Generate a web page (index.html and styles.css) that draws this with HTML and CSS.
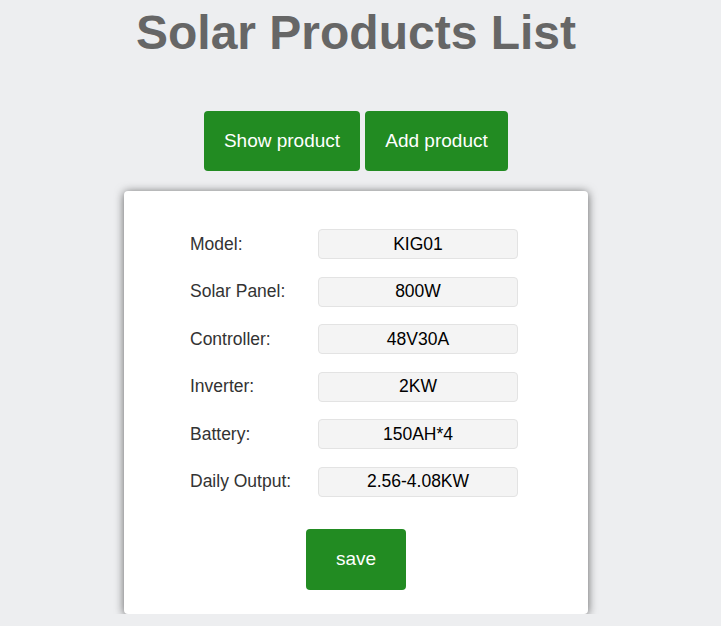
FILE: index.html
```html
<!DOCTYPE html>
<html>
<head>
<meta charset="utf-8">
<link rel="stylesheet" href="styles.css">
</head>
<body>
<div class="page">
  <h1 class="title">Solar Products List</h1>
  <div class="tabs">
    <button class="btn tab tab-show">Show product</button>
    <button class="btn tab tab-add">Add product</button>
  </div>
  <div class="card">
    <div class="form">
      <div class="row"><span class="label">Model:</span><input class="field" value="KIG01"></div>
      <div class="row"><span class="label">Solar Panel:</span><input class="field" value="800W"></div>
      <div class="row"><span class="label">Controller:</span><input class="field" value="48V30A"></div>
      <div class="row"><span class="label">Inverter:</span><input class="field" value="2KW"></div>
      <div class="row"><span class="label">Battery:</span><input class="field" value="150AH*4"></div>
      <div class="row"><span class="label">Daily Output:</span><input class="field" value="2.56-4.08KW"></div>
    </div>
    <div class="actions"><button class="btn save">save</button></div>
  </div>
</div>
</body>
</html>
```
FILE: styles.css
```css
html, body {
  margin: 0;
  padding: 0;
  background: #edeef0;
  font-family: "Liberation Sans", Arial, sans-serif;
}
.page {
  width: 712px;
  display: flex;
  flex-direction: column;
  align-items: center;
}
.title {
  margin: 5px 0 0;
  font-size: 48px;
  font-weight: bold;
  color: #666666;
  line-height: 55px;
}
.tabs {
  margin-top: 51px;
  display: flex;
  gap: 5px;
}
.btn {
  background: #228b22;
  color: #ffffff;
  border: none;
  border-radius: 4px;
  font-family: "Liberation Sans", Arial, sans-serif;
  font-size: 19px;
  height: 60px;
  padding: 0;
  cursor: pointer;
}
.tab-show {
  width: 156px;
}
.tab-add {
  width: 143px;
}
.card {
  margin-top: 20px;
  width: 464px;
  box-sizing: border-box;
  background: #ffffff;
  border-radius: 4px;
  box-shadow: 0 1px 10px rgba(0, 0, 0, 0.6);
  padding: 38px 0 24px 66px;
}
.form {
  display: flex;
  flex-direction: column;
  gap: 17.6px;
}
.row {
  display: flex;
  align-items: center;
  height: 30px;
}
.label {
  width: 128px;
  font-size: 17.5px;
  color: #333333;
}
.field {
  width: 200px;
  height: 30px;
  box-sizing: border-box;
  border: 1px solid #e3e3e3;
  border-radius: 4px;
  background: #f4f4f4;
  text-align: center;
  font-family: "Liberation Sans", Arial, sans-serif;
  font-size: 17.5px;
  color: #000000;
  padding: 0;
  outline: none;
}
.actions {
  margin-top: 32px;
  display: flex;
  justify-content: center;
  padding-right: 66px;
}
.save {
  width: 100px;
  height: 61px;
}
```
